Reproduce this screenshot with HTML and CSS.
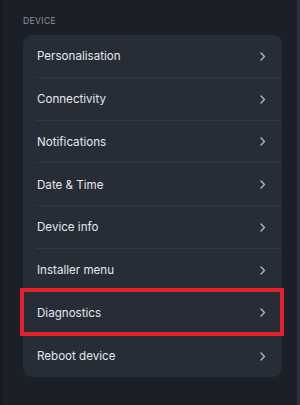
FILE: index.html
```html
<!DOCTYPE html>
<html>
<head>
<meta charset="utf-8">
<link rel="stylesheet" href="styles.css">
</head>
<body>
<div class="screen">
  <div class="section-label">DEVICE</div>
  <div class="card">
    <div class="row"><span class="label">Personalisation</span><svg class="chev" viewBox="0 0 6 9"><path d="M1 1l3.5 3.5L1 8"/></svg></div>
    <div class="row"><span class="label">Connectivity</span><svg class="chev" viewBox="0 0 6 9"><path d="M1 1l3.5 3.5L1 8"/></svg></div>
    <div class="row"><span class="label">Notifications</span><svg class="chev" viewBox="0 0 6 9"><path d="M1 1l3.5 3.5L1 8"/></svg></div>
    <div class="row"><span class="label">Date &amp; Time</span><svg class="chev" viewBox="0 0 6 9"><path d="M1 1l3.5 3.5L1 8"/></svg></div>
    <div class="row"><span class="label">Device info</span><svg class="chev" viewBox="0 0 6 9"><path d="M1 1l3.5 3.5L1 8"/></svg></div>
    <div class="row"><span class="label">Installer menu</span><svg class="chev" viewBox="0 0 6 9"><path d="M1 1l3.5 3.5L1 8"/></svg></div>
    <div class="row highlighted"><span class="label">Diagnostics</span><svg class="chev" viewBox="0 0 6 9"><path d="M1 1l3.5 3.5L1 8"/></svg><div class="highlight"></div></div>
    <div class="row last"><span class="label">Reboot device</span><svg class="chev" viewBox="0 0 6 9"><path d="M1 1l3.5 3.5L1 8"/></svg></div>
  </div>
</div>
</body>
</html>
```
FILE: styles.css
```css
html, body {
  margin: 0;
  padding: 0;
  background: #1b1f28;
}
.screen {
  width: 300px;
  height: 405px;
  box-sizing: border-box;
  padding: 16px 18px 0 23px;
  background: #1b1f28;
  border-left: 2px solid #15181f;
  border-right: 3px solid #2c313b;
  font-family: Inter, "Noto Sans", sans-serif;
}
.section-label {
  margin-left: -2px;
  font-size: 8.5px;
  line-height: 10px;
  letter-spacing: 0.4px;
  color: #8d939c;
  height: 19px;
}
.card {
  width: 259px;
  background: #272d37;
  border-radius: 9px;
  margin-left: -2px;
}
.row {
  position: relative;
  height: 42.75px;
  box-sizing: border-box;
  display: flex;
  align-items: center;
  justify-content: space-between;
  margin-left: 13px;
  padding-right: 16px;
  padding-top: 1px;
  border-bottom: 1px solid #323945;
}
.row.last {
  border-bottom: none;
}
.label {
  font-size: 11.6px;
  color: #e4e7eb;
  margin-left: 1px;
}
.chev {
  width: 6px;
  height: 9px;
  fill: none;
  stroke: #b4b9c0;
  stroke-width: 1.4;
  stroke-linecap: round;
  stroke-linejoin: round;
}
.highlight {
  position: absolute;
  left: -16px;
  right: -2px;
  top: -4px;
  bottom: -3px;
  border: 4px solid #e0232d;
}
```
